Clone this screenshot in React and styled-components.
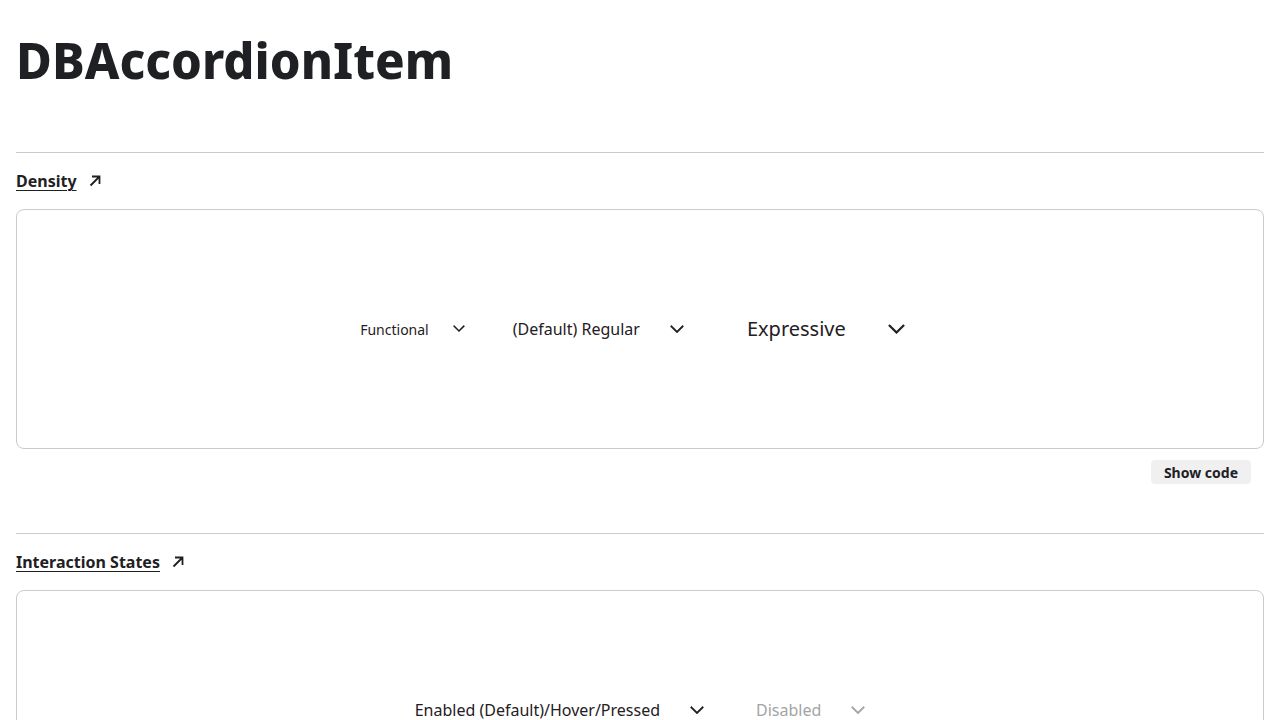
import React from "react";
import styled, { createGlobalStyle } from "styled-components";

const GlobalStyle = createGlobalStyle`
  html, body {
    margin: 0;
    padding: 0;
    background: #ffffff;
    color: #1f2023;
    font-family: "Noto Sans", "Open Sans", sans-serif;
  }
  * { box-sizing: border-box; }
`;

const densities = {
  functional: { font: 14, pad: 14, chevron: 12, gap: 24 },
  regular: { font: 16, pad: 18, chevron: 14, gap: 30 },
  expressive: { font: 20, pad: 29, chevron: 17, gap: 42 },
};

const sections = [
  {
    title: "Density",
    items: [
      { label: "Functional", density: "functional" },
      { label: "(Default) Regular", density: "regular" },
      { label: "Expressive", density: "expressive" },
    ],
  },
  {
    title: "Interaction States",
    items: [
      { label: "Enabled (Default)/Hover/Pressed", density: "regular" },
      { label: "Disabled", density: "regular", disabled: true },
    ],
  },
];

function Chevron({ width }) {
  return (
    <svg width={width} height={width * 0.6} viewBox="0 0 20 12" fill="none">
      <polyline
        points="2,2 10,10 18,2"
        stroke="currentColor"
        strokeWidth="2.6"
        strokeLinecap="square"
      />
    </svg>
  );
}

function ArrowUpRight() {
  return (
    <svg width="16" height="16" viewBox="0 0 16 16" fill="none">
      <path d="M3.5 12.5L12 4M5 3.5h7.5V11" stroke="currentColor" strokeWidth="1.8" />
    </svg>
  );
}

export default function App() {
  return (
    <Page>
      <GlobalStyle />
      <Title>DBAccordionItem</Title>
      {sections.map((section) => (
        <Section key={section.title}>
          <SectionLink href="#">
            <span>{section.title}</span>
            <ArrowUpRight />
          </SectionLink>
          <Preview>
            {section.items.map((item) => {
              const d = densities[item.density];
              return (
                <Item key={item.label} $d={d} $disabled={item.disabled}>
                  <Label>{item.label}</Label>
                  <Chevron width={d.chevron} />
                </Item>
              );
            })}
          </Preview>
          <Actions>
            <CodeButton>Show code</CodeButton>
          </Actions>
        </Section>
      ))}
    </Page>
  );
}

const Page = styled.div`
  padding: 0 16px 40px;
`;

const Title = styled.h1`
  margin: 0;
  padding-top: 24px;
  height: 152px;
  font-size: 49px;
  line-height: 72px;
  font-weight: 800;
  color: #1f2023;
`;

const Section = styled.section`
  border-top: 1px solid #c9cacc;
  padding-top: 16px;
  margin-bottom: 49px;
`;

const SectionLink = styled.a`
  display: inline-flex;
  align-items: center;
  gap: 10px;
  height: 24px;
  font-size: 16px;
  font-weight: 700;
  color: #1f2023;
  text-decoration: none;

  span {
    text-decoration: underline;
    text-underline-offset: 3px;
    text-decoration-thickness: 1px;
  }
`;

const Preview = styled.div`
  margin-top: 16px;
  height: 240px;
  border: 1px solid #c9cacc;
  border-radius: 8px;
  display: flex;
  align-items: center;
  justify-content: center;
  gap: 16px;
`;

const Item = styled.div`
  display: flex;
  align-items: center;
  gap: ${(p) => p.$d.gap}px;
  padding: 8px ${(p) => p.$d.pad}px;
  font-size: ${(p) => p.$d.font}px;
  color: ${(p) => (p.$disabled ? "#a3a4a6" : "#1f2023")};
`;

const Label = styled.span`
  line-height: 1.5;
`;

const Actions = styled.div`
  display: flex;
  justify-content: flex-end;
  margin-top: 11px;
  padding-right: 13px;
`;

const CodeButton = styled.button`
  height: 24px;
  padding: 0 13px;
  border: none;
  border-radius: 4px;
  background: #f0f0f1;
  color: #1f2023;
  font-family: "Noto Sans", "Open Sans", sans-serif;
  font-size: 14px;
  font-weight: 700;
  cursor: pointer;
`;
